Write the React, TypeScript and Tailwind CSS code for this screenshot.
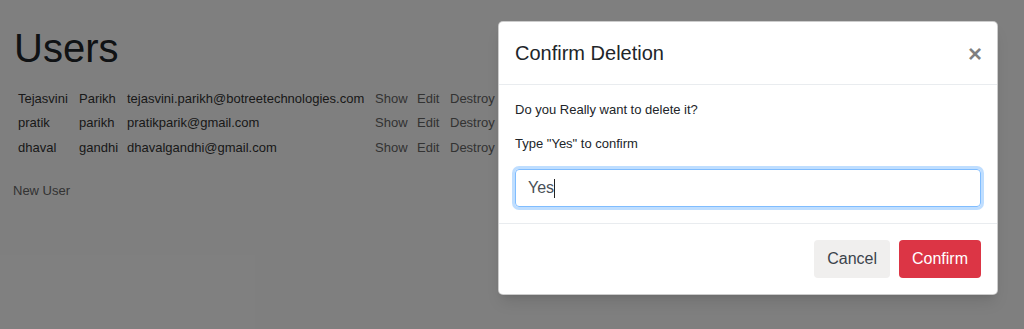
import React from "react";

const users = [
  { first: "Tejasvini", last: "Parikh", email: "tejasvini.parikh@botreetechnologies.com" },
  { first: "pratik", last: "parikh", email: "pratikparik@gmail.com" },
  { first: "dhaval", last: "gandhi", email: "dhavalgandhi@gmail.com" },
];

export default function App() {
  return (
    <div className="relative w-[1024px] h-[329px] overflow-hidden bg-white font-['Liberation_Sans',Arial,sans-serif]">
      {/* Page content */}
      <div className="pl-[13px] pt-[24px]">
        <h1 className="pl-[1px] text-[40px] leading-[48px] text-[#212529]">Users</h1>
        <div className="mt-[14px] pl-[5px] text-[13px] text-[#333]">
          {users.map((u) => (
            <div key={u.email} className="flex h-[24.5px] items-center">
              <span className="w-[61px]">{u.first}</span>
              <span className="w-[48px]">{u.last}</span>
              <span className="w-[248px]">{u.email}</span>
              <span className="w-[42px] text-[#666]">Show</span>
              <span className="w-[33px] text-[#666]">Edit</span>
              <span className="text-[#666]">Destroy</span>
            </div>
          ))}
        </div>
        <div className="mt-[21px] text-[13px] text-[#666]">New User</div>
      </div>

      {/* Backdrop */}
      <div className="absolute inset-0 bg-black/50" />

      {/* Modal */}
      <div className="absolute left-[498px] top-[21px] w-[500px] rounded-[5px] border border-black/20 bg-white text-[#212529] shadow-lg">
        <div className="flex items-start justify-between border-b border-[#e9ecef] px-[16px] py-[16px]">
          <h5 className="text-[20px] leading-[30px]">Confirm Deletion</h5>
          <button className="mt-[4px] -mr-[1px] text-[24px] font-bold leading-none text-black/50">×</button>
        </div>
        <div className="p-[16px] text-[13px] leading-[18px]">
          <p className="mb-[16px]">Do you Really want to delete it?</p>
          <p className="mb-[16px]">Type "Yes" to confirm</p>
          <div className="flex h-[38px] items-center rounded-[4px] border border-[#80bdff] px-[12px] text-[16px] text-[#495057] shadow-[0_0_0_3px_rgba(0,123,255,0.25)]">
            <span>Yes</span>
            <span className="h-[19px] w-px bg-[#222]" />
          </div>
        </div>
        <div className="flex justify-end gap-[9px] border-t border-[#e9ecef] p-[16px]">
          <button className="h-[38px] rounded-[4px] bg-[#f0efee] px-[13px] text-[16px] text-[#3b434b]">Cancel</button>
          <button className="h-[38px] rounded-[4px] bg-[#dc3545] px-[13px] text-[16px] text-white">Confirm</button>
        </div>
      </div>
    </div>
  );
}
